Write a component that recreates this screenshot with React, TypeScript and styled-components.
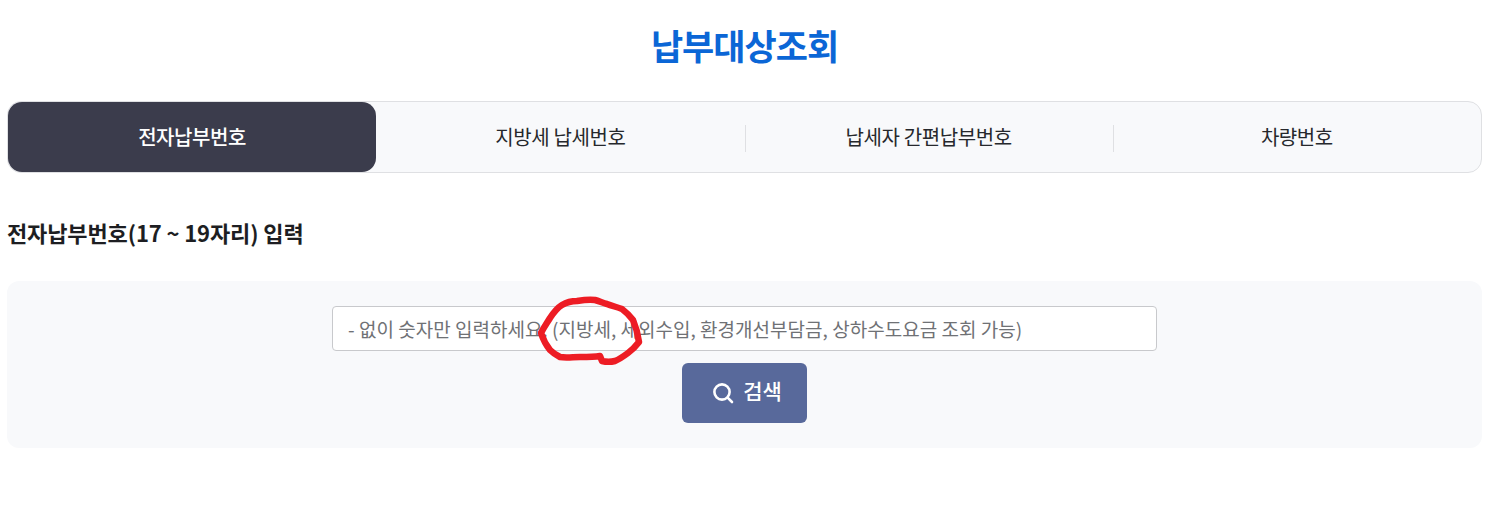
import styled, { createGlobalStyle } from "styled-components"

const TABS = ["전자납부번호", "지방세 납세번호", "납세자 간편납부번호", "차량번호"]

const GlobalStyle = createGlobalStyle`
  html, body {
    margin: 0;
    padding: 0;
    background: #fff;
    font-family: "Noto Sans CJK KR", "Noto Sans", sans-serif;
  }
  * {
    box-sizing: border-box;
  }
`

const App = () => {
    return <Page>
        <GlobalStyle />
        <Title>납부대상조회</Title>
        <TabList>
            {TABS.map((tab, index) => (
                <Tab key={tab} $active={index === 0} $divider={index > 1}>{tab}</Tab>
            ))}
        </TabList>
        <SectionTitle>전자납부번호(17 ~ 19자리) 입력</SectionTitle>
        <SearchPanel>
            <SearchInput placeholder="- 없이 숫자만 입력하세요. (지방세, 세외수입, 환경개선부담금, 상하수도요금 조회 가능)" />
            <SearchButton>
                <svg width="22" height="22" viewBox="0 0 22 22" fill="none" stroke="currentColor" strokeWidth="2.6" strokeLinecap="round">
                    <circle cx="10" cy="10" r="7.6" />
                    <path d="M15.6 15.6 L20 20" />
                </svg>
                검색
            </SearchButton>
        </SearchPanel>
        <Scribble width="108" height="72" viewBox="0 0 108 72" fill="none" stroke="#ed1c24" strokeWidth="6.5" strokeLinecap="round" strokeLinejoin="round">
            <path d="M3 37 C6 31 9 27 12 22 C16 16 19 12 24 9 C29 6 34 5 39 5 C45 4 51 3 57 4 C61 5 65 7 69 8 C74 10 79 11 84 13 C88 16 92 20 95 24 C98 31 100 39 101 46 C98 50 94 54 90 57 C86 60 82 63 77 65 C73 66 68 66 64 65 L62 60 C56 61 49 61 42 61 C35 61 28 62 22 61 C18 59 15 57 12 54 C8 49 5 43 3 37 Z" />
        </Scribble>
    </Page>
}

const Page = styled.div`
    position: relative;
    height: 506px;
    padding: 0 17px 0 7px;
    overflow: hidden;
`

const Title = styled.h1`
    margin: 0;
    height: 101px;
    padding-top: 18px;
    font-size: 35px;
    line-height: 54px;
    font-weight: 700;
    letter-spacing: -1px;
    text-align: center;
    color: #0b66d6;
`

const TabList = styled.div`
    display: grid;
    grid-template-columns: repeat(4, 1fr);
    height: 72px;
    background: #f8f9fb;
    border: 1px solid #dfe0e3;
    border-radius: 14px;
`

const Tab = styled.div<{ $active: boolean; $divider: boolean }>`
    position: relative;
    display: flex;
    align-items: center;
    justify-content: center;
    padding-bottom: 1px;
    font-size: 20px;
    letter-spacing: -0.4px;
    font-weight: ${p => (p.$active ? 500 : 400)};
    color: ${p => (p.$active ? "#fff" : "#26282c")};
    background: ${p => (p.$active ? "#3b3c4c" : "transparent")};
    border-radius: ${p => (p.$active ? "14px" : "0")};

    &::before {
        content: "";
        display: ${p => (p.$divider ? "block" : "none")};
        position: absolute;
        left: 0;
        top: 23px;
        height: 27px;
        width: 1px;
        background: #dfe0e3;
    }
`

const SectionTitle = styled.h2`
    margin: 43px 0 0;
    height: 65px;
    font-size: 22px;
    line-height: 32px;
    font-weight: 700;
    letter-spacing: -0.12px;
    color: #1d1e22;
`

const SearchPanel = styled.div`
    display: flex;
    flex-direction: column;
    align-items: center;
    gap: 12px;
    height: 167px;
    padding-top: 25px;
    background: #f8f9fb;
    border-radius: 12px;
`

const SearchInput = styled.input`
    width: 825px;
    height: 45px;
    padding: 0 15px;
    background: #fff;
    border: 1px solid #c8c9cc;
    border-radius: 4px;
    font-family: inherit;
    font-size: 19px;
    letter-spacing: 0.02px;
    outline: none;

    &::placeholder {
        color: #6f7175;
        opacity: 1;
    }
`

const SearchButton = styled.button`
    display: flex;
    align-items: center;
    justify-content: center;
    gap: 9px;
    width: 125px;
    height: 60px;
    padding: 0 0 6px 5px;
    background: #58699b;
    border: 0;
    border-radius: 6px;
    font-family: inherit;
    font-size: 21px;
    font-weight: 500;
    color: #fff;

    svg {
        margin-top: 5px;
    }
`

const Scribble = styled.svg`
    position: absolute;
    left: 538px;
    top: 296px;
`

export default App
